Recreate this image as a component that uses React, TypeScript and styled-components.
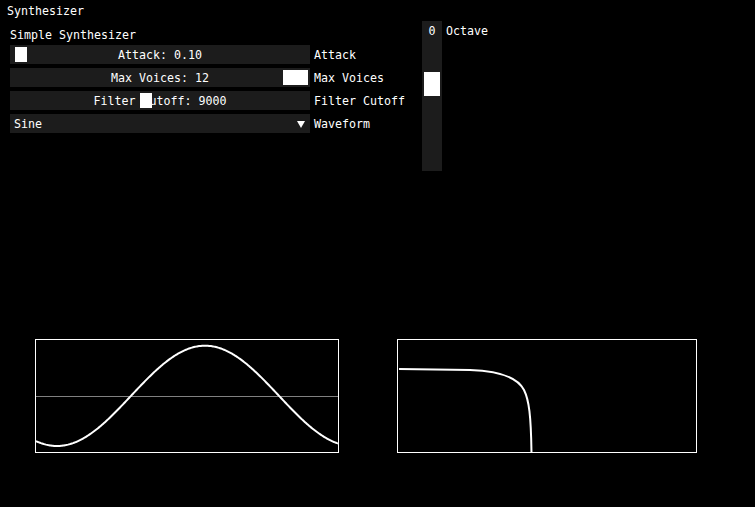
import React from 'react';
import styled, { createGlobalStyle } from 'styled-components';

const GlobalStyle = createGlobalStyle`
  html, body { margin: 0; padding: 0; background: #000; }
  body {
    width: 755px;
    height: 507px;
    overflow: hidden;
    font-family: "DejaVu Sans Mono", "Liberation Mono", monospace;
    font-size: 11.63px;
    color: #fff;
  }
`;

const Page = styled.div`
  width: 755px;
  height: 507px;
  box-sizing: border-box;
  padding-top: 4.5px;
  background: #000;
  display: flex;
  flex-direction: column;
`;

const WindowTitle = styled.div`
  height: 13px;
  line-height: 13px;
  padding-left: 7px;
  white-space: pre;
`;

const Body = styled.div`
  display: flex;
  margin-top: 3.5px;
  padding-left: 10px;
`;

const Controls = styled.div`
  width: 412px;
  display: flex;
  flex-direction: column;
  padding-top: 7.5px;
`;

const Heading = styled.div`
  height: 13px;
  line-height: 13px;
  margin-bottom: 3.5px;
  white-space: pre;
`;

const Rows = styled.div`
  display: flex;
  flex-direction: column;
  gap: 4px;
`;

const Row = styled.div`
  display: flex;
  align-items: flex-start;
  gap: 4px;
  height: 19px;
`;

const Frame = styled.div`
  position: relative;
  width: 300px;
  height: 19px;
  background: #1c1c1c;
  flex: none;
`;

const Grab = styled.div<{ $left: number; $width: number }>`
  position: absolute;
  top: 2px;
  left: ${(p) => p.$left}px;
  width: ${(p) => p.$width}px;
  height: 15px;
  background: #fff;
`;

const SliderText = styled.div`
  position: relative;
  height: 19px;
  line-height: 20px;
  text-align: center;
  white-space: pre;
`;

const Label = styled.div`
  height: 19px;
  line-height: 20px;
  white-space: pre;
`;

const ComboFrame = styled(Frame)`
  display: flex;
  align-items: flex-start;
  justify-content: space-between;
`;

const ComboValue = styled.div`
  padding-left: 4px;
  height: 19px;
  line-height: 20px;
`;

const ArrowBox = styled.div`
  width: 19px;
  height: 19px;
  display: flex;
  align-items: flex-start;
  padding: 7px 0 0 6px;
  box-sizing: border-box;
`;

const OctaveGroup = styled.div`
  display: flex;
  align-items: flex-start;
`;

const VFrame = styled.div`
  position: relative;
  width: 20px;
  height: 150px;
  background: #1c1c1c;
`;

const VGrab = styled.div<{ $top: number }>`
  position: absolute;
  left: 2px;
  top: ${(p) => p.$top}px;
  width: 16px;
  height: 24px;
  background: #fff;
`;

const VValue = styled.div`
  position: relative;
  padding-top: 3.5px;
  line-height: 13px;
  text-align: center;
`;

const OctaveLabel = styled.div`
  margin-left: 4px;
  padding-top: 3.5px;
  line-height: 13px;
`;

const Plots = styled.div`
  display: flex;
  gap: 58px;
  padding-left: 35px;
  margin-top: 168px;
`;

const PlotBox = styled.div<{ $w: number }>`
  width: ${(p) => p.$w}px;
  height: 114px;
  box-sizing: border-box;
  border: 1px solid #fff;
  overflow: hidden;
`;

const PlotSvg = styled.svg`
  display: block;
`;

function sinePath(): string {
  const pts: string[] = [];
  for (let X = 36; X <= 338; X += 1) {
    const y = 395.85 - 50.15 * Math.sin((2 * Math.PI * (X - 131)) / 296) - 340;
    pts.push(`${(X - 36).toFixed(1)} ${y.toFixed(2)}`);
  }
  return 'M' + pts.join(' L');
}

const SinePlot: React.FC = () => (
  <PlotBox $w={304}>
    <PlotSvg width={302} height={112} viewBox="0 0 302 112">
      <line x1={0} y1={56.5} x2={302} y2={56.5} stroke="#808080" strokeWidth={1} />
      <path d={sinePath()} fill="none" stroke="#fff" strokeWidth={2} strokeLinejoin="round" />
    </PlotSvg>
  </PlotBox>
);

const FilterPlot: React.FC = () => (
  <PlotBox $w={300}>
    <PlotSvg width={298} height={112} viewBox="0 0 298 112">
      <path
        d="M1 29 L72 30 C102 31 120 38 126 50 C131 60 133 75 133.5 114"
        fill="none"
        stroke="#fff"
        strokeWidth={2}
      />
    </PlotSvg>
  </PlotBox>
);

export default function App() {
  return (
    <>
      <GlobalStyle />
      <Page>
        <WindowTitle>Synthesizer</WindowTitle>
        <Body>
          <Controls>
            <Heading>Simple Synthesizer</Heading>
            <Rows>
              <Row>
                <Frame>
                  <Grab $left={5} $width={12} />
                  <SliderText>Attack: 0.10</SliderText>
                </Frame>
                <Label>Attack</Label>
              </Row>
              <Row>
                <Frame>
                  <Grab $left={273} $width={25} />
                  <SliderText>Max Voices: 12</SliderText>
                </Frame>
                <Label>Max Voices</Label>
              </Row>
              <Row>
                <Frame>
                  <Grab $left={130} $width={12} />
                  <SliderText>Filter Cutoff: 9000</SliderText>
                </Frame>
                <Label>Filter Cutoff</Label>
              </Row>
              <Row>
                <ComboFrame>
                  <ComboValue>Sine</ComboValue>
                  <ArrowBox>
                    <svg width="8" height="7" viewBox="0 0 8 7">
                      <polygon points="0,0 8,0 4,7" fill="#fff" />
                    </svg>
                  </ArrowBox>
                </ComboFrame>
                <Label>Waveform</Label>
              </Row>
            </Rows>
          </Controls>
          <OctaveGroup>
            <VFrame>
              <VGrab $top={51} />
              <VValue>0</VValue>
            </VFrame>
            <OctaveLabel>Octave</OctaveLabel>
          </OctaveGroup>
        </Body>
        <Plots>
          <SinePlot />
          <FilterPlot />
        </Plots>
      </Page>
    </>
  );
}
